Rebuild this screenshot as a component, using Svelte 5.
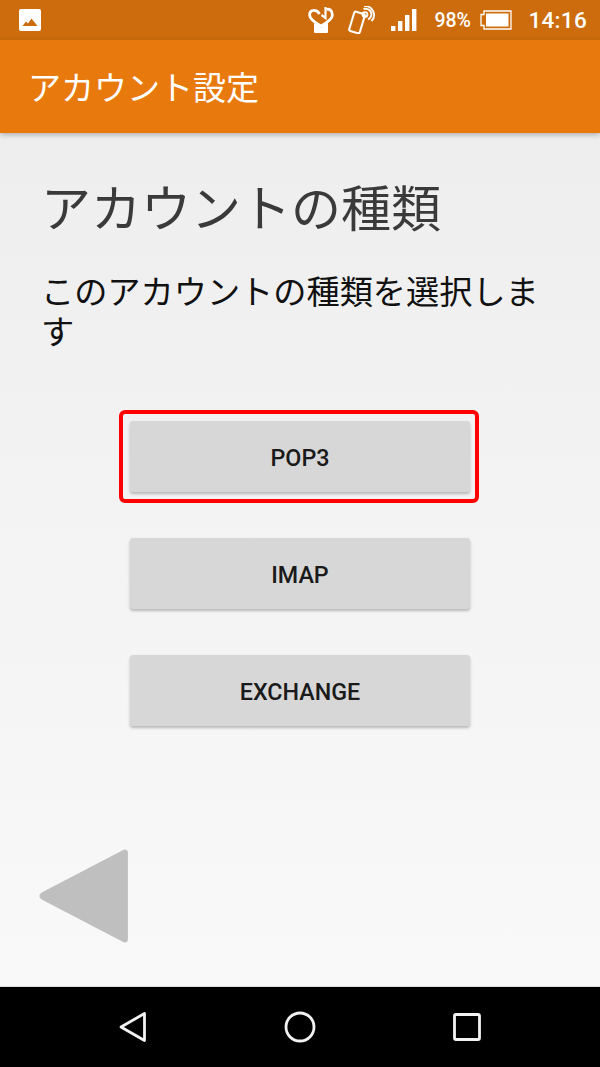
<script>
  const options = [
    { label: 'POP3', selected: true },
    { label: 'IMAP', selected: false },
    { label: 'EXCHANGE', selected: false }
  ];
</script>

<div class="screen">
  <div class="status">
    <svg class="pic" viewBox="0 0 22 22"><rect width="22" height="22" rx="2" fill="#fff"/><path d="M3.5 17 L7 12.5 L9 14.5 L12.5 9.5 L18.5 17 Z" fill="#cc6c0c"/></svg>
    <div class="status-right">
      <svg class="heart" viewBox="0 0 26 26"><path d="M11.5 7 C9 2 1.6 2 1.6 8 C1.6 12.5 8.5 16.5 13 19 C17.5 16.5 24.4 12.5 24.4 8 C24.4 3.5 21.5 1.5 18.5 2.5" fill="none" stroke="#fff" stroke-width="2.8"/><path d="M17.5 0 V11 L13.5 8" fill="none" stroke="#fff" stroke-width="2.2"/><path d="M6 15 L13 20.5 L20 15 V25 Q20 26 19 26 H7 Q6 26 6 25 Z" fill="#fff"/></svg>
      <svg class="nfc" viewBox="0 0 28 28"><rect x="3.5" y="6.5" width="11" height="20" rx="1.5" transform="rotate(17 9 16.5)" fill="none" stroke="#fff" stroke-width="2.1"/><circle cx="17" cy="8.5" r="2.4" fill="none" stroke="#fff" stroke-width="1.9"/><path d="M15.5 3.2 A5.6 5.6 0 0 1 20 13.5 M16 0.2 A8.8 8.8 0 0 1 23.5 15" fill="none" stroke="#fff" stroke-width="1.9"/></svg>
      <svg class="signal" viewBox="0 0 26 22"><rect x="0" y="17" width="4.4" height="5" fill="#fff"/><rect x="7" y="12" width="4.4" height="10" fill="#fff"/><rect x="14" y="6" width="4.4" height="16" fill="#fff"/><rect x="21" y="0" width="4.4" height="22" fill="#fff"/></svg>
      <span class="pct">98%</span>
      <svg class="battery" viewBox="0 0 32 20"><path d="M4 1 H31 V19 H4 V15.5 H1 V4.5 H4 Z" fill="none" stroke="#fff" stroke-width="1.3"/><rect x="6" y="3.5" width="22.5" height="13" fill="#fff"/></svg>
      <span class="clock">14:16</span>
    </div>
  </div>

  <header class="appbar">アカウント設定</header>

  <main class="content">
    <h1>アカウントの種類</h1>
    <p>このアカウントの種類を選択します</p>
    <div class="options">
      {#each options as o}
        <div class="slot" class:selected={o.selected}>
          <button type="button">{o.label}</button>
        </div>
      {/each}
    </div>
    <svg class="back" viewBox="0 0 90 96"><path d="M84 2.5 Q88.5 0.5 88.5 5 V91 Q88.5 95.5 84 93.5 L2.5 51 Q-1 48 2.5 45 Z" fill="#bfbfbf" stroke="#b5b5b5" stroke-width="0.6"/></svg>
  </main>

  <nav class="navbar">
    <svg class="n-back" viewBox="0 0 28 32"><path d="M2 16 L25.5 2.5 V29.5 Z" fill="none" stroke="#f2f2f2" stroke-width="2.8" stroke-linejoin="round"/></svg>
    <svg class="n-home" viewBox="0 0 32 32"><circle cx="16" cy="16" r="14" fill="none" stroke="#f2f2f2" stroke-width="2.8"/></svg>
    <svg class="n-recent" viewBox="0 0 28 28"><rect x="1.5" y="1.5" width="25" height="25" rx="1.5" fill="none" stroke="#f2f2f2" stroke-width="2.8"/></svg>
  </nav>
</div>

<style>
  :global(body) { margin: 0; }
  .screen {
    width: 600px;
    height: 1067px;
    display: flex;
    flex-direction: column;
    overflow: hidden;
    font-family: "Noto Sans CJK JP", Roboto, sans-serif;
  }
  .status {
    height: 40px;
    flex: none;
    background: #cc6c0c;
    display: flex;
    align-items: center;
    justify-content: space-between;
    padding: 0 13px 0 19px;
    color: #fff;
  }
  .pic { width: 22px; height: 22px; margin-bottom: 1px; }
  .status-right { display: flex; align-items: center; }
  .heart { width: 26px; height: 26px; }
  .nfc { width: 28px; height: 28px; margin-left: 14px; }
  .signal { width: 26px; height: 22px; margin-left: 15px; }
  .pct { font: 500 19.5px Roboto, sans-serif; margin-left: 17px; width: 38px; }
  .battery { width: 32px; height: 20px; margin-left: 8px; }
  .clock { font: 500 22.5px Roboto, sans-serif; margin-left: 16px; letter-spacing: 0.3px; }
  .appbar {
    height: 93px;
    flex: none;
    box-sizing: border-box;
    background: #e8790c;
    color: #fff;
    font-size: 33px;
    font-weight: 400;
    line-height: 92px;
    padding-left: 28px;
    box-shadow: 0 2px 5px rgba(0, 0, 0, 0.25);
    position: relative;
  }
  .content {
    flex: 1;
    display: flex;
    flex-direction: column;
    background: linear-gradient(#eeeeee, #f9f9f9);
    padding: 0 44px;
    min-height: 0;
  }
  h1 {
    margin: 37px 0 0 -3px;
    font-size: 50px;
    font-weight: 400;
    line-height: 70px;
    color: #3a3a3a;
  }
  p {
    margin: 30px -10px 0 -3px;
    font-size: 33.2px;
    font-weight: 400;
    line-height: 39.5px;
    color: #111;
  }
  .options {
    margin-top: 72px;
    display: flex;
    flex-direction: column;
    align-items: center;
    gap: 46px;
  }
  .slot {
    width: 340px;
    height: 71px;
    position: relative;
  }
  .slot.selected::after {
    content: "";
    position: absolute;
    inset: -11px -9px -11px -11px;
    border: 4.5px solid #f00;
    border-radius: 6px;
    pointer-events: none;
  }
  button {
    width: 100%;
    height: 100%;
    border: 0;
    padding: 2px 0 0;
    border-radius: 3px;
    background: #d7d7d7;
    box-shadow: 0 2px 3px rgba(0, 0, 0, 0.25);
    color: #1a1a1a;
    font: 500 23.3px Roboto, sans-serif;
  }
  .back { width: 90px; height: 96px; margin: auto 0 42px -5px; flex: none; }
  .navbar {
    height: 81px;
    flex: none;
    box-sizing: border-box;
    background: #000;
    border-top: 1px solid #e0e0e0;
    display: grid;
    grid-template-columns: 133px 167px 167px;
    align-items: center;
    justify-items: center;
  }
  .n-back { width: 28px; height: 32px; grid-column: 1; justify-self: end; margin-right: -14px; }
  .n-home { width: 32px; height: 32px; grid-column: 2; justify-self: end; margin-right: -16px; }
  .n-recent { width: 28px; height: 28px; grid-column: 3; justify-self: end; margin-right: -14px; }
</style>
